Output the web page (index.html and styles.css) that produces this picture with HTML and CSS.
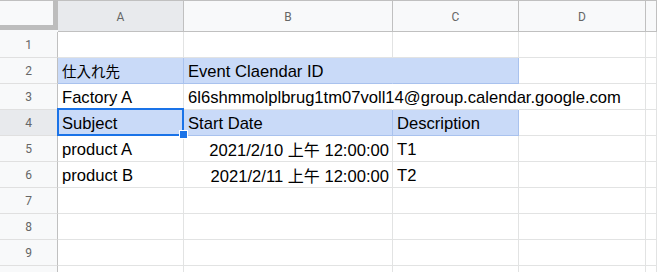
FILE: index.html
```html
<!DOCTYPE html>
<html lang="ja">
<head>
  <meta charset="UTF-8">
  <title>Calendar Sheet</title>
  <link rel="stylesheet" href="styles.css">
</head>
<body>

  <div class="sheet">
    <!-- column headers -->
    <div class="corner"><div class="freeze"></div></div>
    <div class="col-head active">A</div>
    <div class="col-head">B</div>
    <div class="col-head">C</div>
    <div class="col-head">D</div>
    <div class="col-head"></div>

    <!-- row 1 -->
    <div class="row-head">1</div>
    <div class="cell"></div>
    <div class="cell"></div>
    <div class="cell"></div>
    <div class="cell"></div>
    <div class="cell"></div>

    <!-- row 2 (B2:C2 merged) -->
    <div class="row-head">2</div>
    <div class="cell blue"><span class="cjk">仕入れ先</span></div>
    <div class="cell blue merged">Event Claendar ID</div>
    <div class="cell blue"></div>
    <div class="cell"></div>
    <div class="cell"></div>

    <!-- row 3 -->
    <div class="row-head">3</div>
    <div class="cell">Factory A</div>
    <div class="cell spill">6l6shmmolplbrug1tm07voll14@group.calendar.google.com</div>
    <div class="cell spill"></div>
    <div class="cell"></div>
    <div class="cell"></div>

    <!-- row 4 -->
    <div class="row-head active">4</div>
    <div class="cell blue selected">Subject</div>
    <div class="cell blue">Start Date</div>
    <div class="cell blue">Description</div>
    <div class="cell"></div>
    <div class="cell"></div>

    <!-- row 5 -->
    <div class="row-head">5</div>
    <div class="cell">product A</div>
    <div class="cell num">2021/2/10 <span class="cjk ampm">上午</span> 12:00:00</div>
    <div class="cell">T1</div>
    <div class="cell"></div>
    <div class="cell"></div>

    <!-- row 6 -->
    <div class="row-head">6</div>
    <div class="cell">product B</div>
    <div class="cell num">2021/2/11 <span class="cjk ampm">上午</span> 12:00:00</div>
    <div class="cell">T2</div>
    <div class="cell"></div>
    <div class="cell"></div>

    <!-- row 7 -->
    <div class="row-head">7</div>
    <div class="cell"></div>
    <div class="cell"></div>
    <div class="cell"></div>
    <div class="cell"></div>
    <div class="cell"></div>

    <!-- row 8 -->
    <div class="row-head">8</div>
    <div class="cell"></div>
    <div class="cell"></div>
    <div class="cell"></div>
    <div class="cell"></div>
    <div class="cell"></div>

    <!-- row 9 -->
    <div class="row-head">9</div>
    <div class="cell"></div>
    <div class="cell"></div>
    <div class="cell"></div>
    <div class="cell"></div>
    <div class="cell"></div>

    <!-- row 10, cut off by the window -->
    <div class="row-head"></div>
    <div class="cell"></div>
    <div class="cell"></div>
    <div class="cell"></div>
    <div class="cell"></div>
    <div class="cell"></div>
  </div>

</body>
</html>
```

FILE: styles.css
```css
body {
  margin: 0;
  background: #fff;
  overflow: hidden;
  font-family: "Liberation Sans", Arial, "Noto Sans CJK JP", sans-serif;
}

.sheet {
  display: grid;
  grid-template-columns: 58px 126px 209px 126px 127px 1fr;
  grid-template-rows: 32px repeat(9, 26px) 8px;
  width: 657px;
  height: 272px;
  overflow: hidden;
}

.sheet > div {
  box-sizing: border-box;
}

/* headers */
.corner {
  position: relative;
  background: #f8f9fa;
  border-top: 1px solid #c0c0c0;
}

.freeze {
  position: absolute;
  top: -1px;
  left: 0;
  width: 53px;
  height: 25px;
  border-right: 5px solid #bdbdbd;
  border-bottom: 5px solid #bdbdbd;
}

.col-head {
  display: flex;
  align-items: center;
  justify-content: center;
  padding-top: 2px;
  background: #f8f9fa;
  border-top: 1px solid #c0c0c0;
  border-right: 1px solid #c0c0c0;
  border-bottom: 1px solid #c0c0c0;
  color: #666;
  font-family: Roboto, "Liberation Sans", sans-serif;
  font-size: 12px;
}

.row-head {
  display: flex;
  align-items: center;
  justify-content: center;
  background: #f8f9fa;
  border-right: 1px solid #c0c0c0;
  border-bottom: 1px solid #e0e0e0;
  color: #666;
  font-family: Roboto, "Liberation Sans", sans-serif;
  font-size: 12px;
}

.col-head.active,
.row-head.active {
  background: #e8eaed;
}

/* cells: 10pt at 125%, text sits on the bottom of the cell */
.cell {
  padding: 5px 3px 0 4px;
  border-right: 1px solid #e2e3e3;
  border-bottom: 1px solid #e2e3e3;
  color: #000;
  font-size: 16.6px;
  line-height: 18px;
  white-space: nowrap;
}

.cell.blue {
  background: #c9daf8;
  border-right-color: #a9c2ee;
  border-bottom-color: #a9c2ee;
}

.cell.merged {
  border-right-color: #c9daf8;
}

.cell.num {
  text-align: right;
}

/* long text runs over the empty cells to its right */
.cell.spill {
  border-right-color: transparent;
}

.cjk {
  font-family: "Noto Sans CJK TC", "Noto Sans CJK JP", sans-serif;
  font-size: 14.5px;
  line-height: 1;
}

.cjk.ampm {
  font-size: 16px;
}

/* active cell outline and fill handle */
.selected {
  position: relative;
}

.selected::before {
  content: "";
  position: absolute;
  top: -2px;
  left: -1px;
  right: -1px;
  bottom: -1px;
  border: 2px solid #1a73e8;
}

.selected::after {
  content: "";
  position: absolute;
  right: -5px;
  bottom: -4px;
  width: 7px;
  height: 7px;
  background: #1a73e8;
  border: 1px solid #fff;
  z-index: 1;
}
```
